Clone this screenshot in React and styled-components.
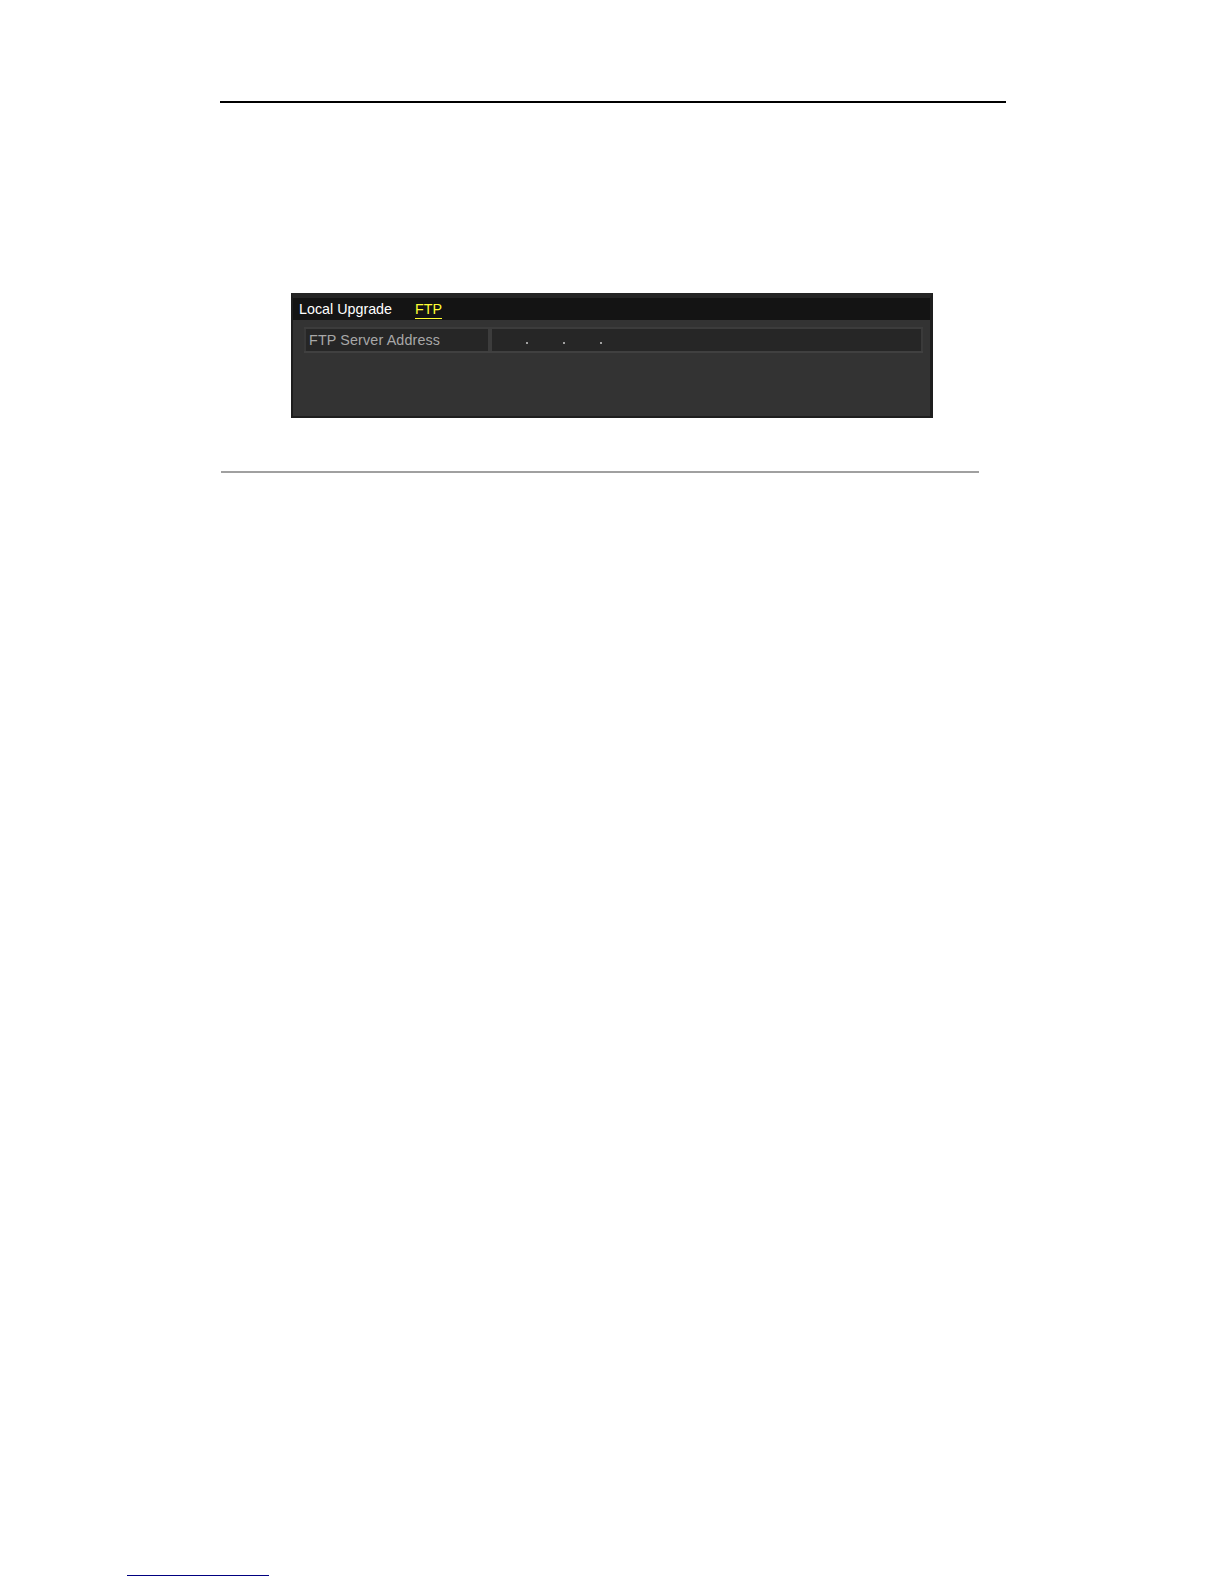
import React from 'react';
import styled, { createGlobalStyle } from 'styled-components';

const GlobalStyle = createGlobalStyle`
  html, body {
    margin: 0;
    padding: 0;
    background: #ffffff;
  }
  body {
    font-family: "Liberation Sans", Arial, sans-serif;
  }
`;

const Page = styled.div`
  width: 1224px;
  height: 1584px;
  display: flex;
  flex-direction: column;
  background: #ffffff;
  overflow: hidden;
`;

const Rule = styled.div`
  margin-top: ${p => p.$top}px;
  margin-left: ${p => p.$left}px;
  width: ${p => p.$width}px;
  height: ${p => p.$thick}px;
  background: ${p => p.$color};
  flex-shrink: 0;
`;

// DVR style dialog with its tab strip
const Panel = styled.div`
  margin-top: 190px;
  margin-left: 291px;
  width: 642px;
  height: 125px;
  flex-shrink: 0;
  box-sizing: border-box;
  background: #333333;
  border: 2px solid #1e1e1e;
  border-top: 5px solid #252525;
  border-right-width: 3px;
  display: flex;
  flex-direction: column;
`;

const TabBar = styled.div`
  height: 22px;
  background: #141414;
  display: flex;
  align-items: center;
  padding-left: 6px;
  gap: 23px;
`;

const Tab = styled.span`
  font-size: 14.3px;
  line-height: 16px;
  color: ${p => (p.$active ? '#ffff33' : '#ffffff')};
  border-bottom: 1px solid ${p => (p.$active ? '#ffff33' : 'transparent')};
  padding-bottom: 1px;
  margin-top: 2px;
`;

const Body = styled.div`
  flex: 1;
  padding: 7px 7px 0 11px;
`;

const FieldRow = styled.div`
  height: 26px;
  display: flex;
  box-sizing: border-box;
  border-top: 2px solid #3c3c3c;
  border-bottom: 2px solid #404040;
  background: #262626;
`;

const Label = styled.div`
  width: 184px;
  box-sizing: border-box;
  border-left: 2px solid #383838;
  display: flex;
  align-items: center;
  padding-left: 3px;
  font-size: 14.3px;
  color: #a8a8a8;
  letter-spacing: 0.15px;
`;

const Divider = styled.div`
  width: 4px;
  background: #3c3c3c;
`;

const IpField = styled.div`
  flex: 1;
  display: flex;
  align-items: flex-end;
  padding-bottom: 7px;
  padding-left: 34px;
  gap: 35px;
  border-right: 2px solid #3a3a3a;
`;

const Dot = styled.span`
  width: 2px;
  height: 2px;
  background: #a0a0a0;
`;

export default function App() {
  return (
    <>
      <GlobalStyle />
      <Page>
        <Rule $top={101} $left={220} $width={786} $thick={2} $color="#000000" />
        <Panel>
          <TabBar>
            <Tab>Local Upgrade</Tab>
            <Tab $active>FTP</Tab>
          </TabBar>
          <Body>
            <FieldRow>
              <Label>FTP Server Address</Label>
              <Divider />
              <IpField>
                <Dot />
                <Dot />
                <Dot />
              </IpField>
            </FieldRow>
          </Body>
        </Panel>
        <Rule $top={53} $left={221} $width={758} $thick={2} $color="#a0a0a0" />
        <Rule $top={1102} $left={127} $width={142} $thick={1} $color="#000080" />
      </Page>
    </>
  );
}
